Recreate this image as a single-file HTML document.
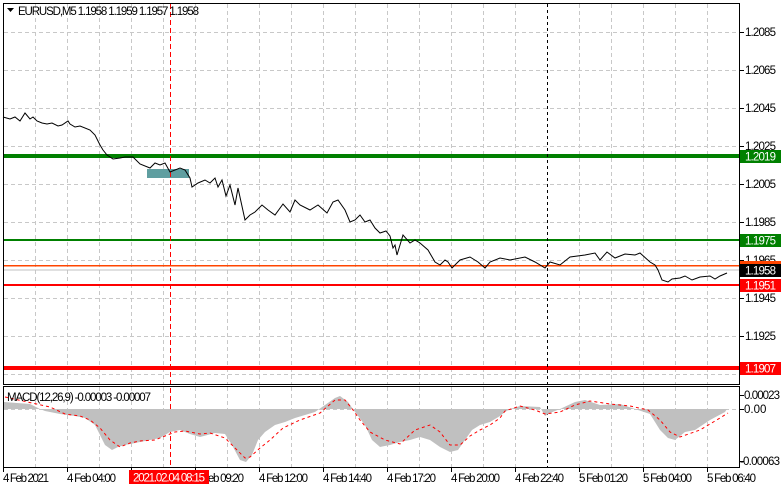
<!DOCTYPE html>
<html><head><meta charset="utf-8">
<style>
html,body{margin:0;padding:0;background:#fff;width:781px;height:489px;overflow:hidden}
svg{display:block}
text{font-family:"Liberation Sans",sans-serif;font-size:11.5px;fill:#000}
</style></head><body>
<svg width="781" height="489" viewBox="0 0 781 489" xmlns="http://www.w3.org/2000/svg">
<rect width="781" height="489" fill="#fff"/>
<g stroke="#c8c8c8" stroke-width="1" stroke-dasharray="4,3">
<path d="M35.5 4V384M67.5 4V384M99.5 4V384M131.5 4V384M163.5 4V384M195.5 4V384M227.5 4V384M259.5 4V384M291.5 4V384M323.5 4V384M355.5 4V384M387.5 4V384M419.5 4V384M451.5 4V384M483.5 4V384M515.5 4V384M579.5 4V384M611.5 4V384M643.5 4V384M675.5 4V384M707.5 4V384"/>
<path d="M4 32.5H740M4 70.5H740M4 108.5H740M4 146.5H740M4 184.5H740M4 222.5H740M4 260.5H740M4 298.5H740M4 336.5H740M4 374.5H740"/>
<path d="M35.5 387V467M67.5 387V467M99.5 387V467M131.5 387V467M163.5 387V467M195.5 387V467M227.5 387V467M259.5 387V467M291.5 387V467M323.5 387V467M355.5 387V467M387.5 387V467M419.5 387V467M451.5 387V467M483.5 387V467M515.5 387V467M579.5 387V467M611.5 387V467M643.5 387V467M675.5 387V467M707.5 387V467"/>
<path d="M4 409.5H740"/>
</g>
<rect x="4" y="154" width="736" height="4" fill="#008000"/>
<rect x="4" y="239" width="736" height="2" fill="#008000"/>
<rect x="4" y="265" width="736" height="1.5" fill="#ff4500"/>
<rect x="4" y="269.5" width="736" height="1" fill="#c0c0c0"/>
<rect x="4" y="284" width="736" height="2" fill="#ff0000"/>
<rect x="4" y="366" width="736" height="4" fill="#ff0000"/>
<rect x="147" y="169" width="42" height="9" fill="#5f9ea0"/>
<path d="M170.5 4V467" stroke="#ff0000" stroke-dasharray="5,3"/>
<path d="M547.5 4V467" stroke="#000" stroke-dasharray="3,3"/>
<polyline fill="none" stroke="#000" stroke-width="1" points="3,117 10,119 15,117 20,121 25,113 30,119 33,117 37,121 42,123 47,124 52,123 58,126 62,125 68,121 70,124 75,127 80,126 90,130 95,135 100,145 103,150 107,155 110,157 113,159 120,158 125,157 133,157 140,164 150,168 155,163 160,165 165,163 170,172 180,168 185,170 190,178 192,187 198,183 205,180 210,183 215,178 218,187 222,180 226,196 230,185 235,205 238,188 245,220 250,215 255,212 262,205 268,210 275,215 283,204 290,212 295,200 300,205 310,210 318,205 327,213 333,202 338,200 345,210 350,222 355,220 360,215 365,222 370,220 375,228 380,233 386,231 390,236 393,248 395,245 397,255 400,245 403,235 410,243 415,240 420,243 428,250 435,262 440,265 445,260 448,262 452,268 460,260 470,257 478,262 485,268 490,262 500,258 510,260 525,257 535,262 545,268 550,262 560,265 570,257 585,255 595,253 600,260 607,252 615,258 625,254 635,255 640,253 650,262 655,265 658,270 662,280 668,282 672,279 680,278 685,276 692,280 700,277 710,276 715,279 720,276 727,273"/>
<polygon fill="#c0c0c0" points="4,409 4,402 30,404 40,409 45,411 60,414 75,416 85,418 95,425 100,435 105,445 112,450 118,447 125,445 140,442 150,440 160,438 170,432 180,430 190,434 200,437 215,433 225,434 232,445 240,460 246,462 252,455 258,440 265,432 275,425 285,422 295,418 305,415 315,412 325,405 335,398 340,396 348,402 355,412 365,425 372,440 380,447 390,445 400,442 410,440 420,437 430,440 440,447 450,452 458,450 465,440 472,430 480,425 490,422 500,416 505,412 510,409 520,406 540,407 545,416 550,413 560,409 575,402 585,400 600,405 620,404 635,409 650,414 660,430 668,438 675,440 685,432 695,430 710,420 725,412 727,409"/>
<polyline fill="none" stroke="#ff0000" stroke-width="1" stroke-dasharray="3,3" points="5,397 50,407 65,414 80,416 90,420 100,428 110,440 120,447 130,443 140,441 155,440 165,436 175,432 185,431 195,433 200,434 210,433 225,438 235,448 245,458 250,457 260,448 270,440 283,428 300,420 320,413 335,400 345,400 353,410 360,420 370,432 385,440 400,444 415,430 430,425 440,432 450,445 460,445 470,436 480,430 490,425 500,418 505,411 520,406 535,410 545,414 560,412 575,405 590,401 610,404 630,406 648,410 660,420 670,432 680,437 700,430 720,418 728,413"/>
<g fill="none" stroke="#000" stroke-width="1">
<rect x="3.5" y="3.5" width="736" height="381"/>
<rect x="3.5" y="386.5" width="736" height="81"/>
</g>
<g stroke="#000"><path d="M740 32.5h4M740 70.5h4M740 108.5h4M740 146.5h4M740 184.5h4M740 222.5h4M740 260.5h4M740 298.5h4M740 336.5h4M740 395.5h4M740 409.5h4M740 461.5h4"/>
<path d="M3.5 468v4M67.5 468v4M131.5 468v4M195.5 468v4M259.5 468v4M323.5 468v4M387.5 468v4M451.5 468v4M515.5 468v4M579.5 468v4M643.5 468v4M707.5 468v4"/></g>
<g>
<text x="745" y="36" textLength="31">1.2085</text>
<text x="745" y="74" textLength="31">1.2065</text>
<text x="745" y="112" textLength="31">1.2045</text>
<text x="745" y="150" textLength="31">1.2025</text>
<text x="745" y="188" textLength="31">1.2005</text>
<text x="745" y="226" textLength="31">1.1985</text>
<text x="745" y="264" textLength="31">1.1965</text>
<text x="745" y="302" textLength="31">1.1945</text>
<text x="745" y="340" textLength="31">1.1925</text>
<text x="744" y="399" textLength="36">0.00023</text>
<text x="744" y="413">0.00</text>
<text x="740" y="465" textLength="40">-0.00063</text>
</g>
<rect x="740" y="150" width="41" height="13" fill="#008000"/><text x="745" y="160.5" textLength="31" style="fill:#fff">1.2019</text>
<rect x="740" y="234" width="41" height="13" fill="#008000"/><text x="745" y="244.5" textLength="31" style="fill:#fff">1.1975</text>
<rect x="740" y="261" width="41" height="8" fill="#ff4500"/>
<rect x="740" y="264" width="41" height="13" fill="#000"/><text x="745" y="274.5" textLength="31" style="fill:#fff">1.1958</text>
<rect x="740" y="279" width="41" height="13" fill="#ff0000"/><text x="745" y="289.5" textLength="31" style="fill:#fff">1.1951</text>
<rect x="740" y="362" width="41" height="13" fill="#ff0000"/><text x="745" y="372.5" textLength="31" style="fill:#fff">1.1907</text>
<path d="M7 8h7l-3.5 4z" fill="#000"/>
<text x="18" y="15" textLength="181">EURUSD,M5  1.1958 1.1959 1.1957 1.1958</text>
<text x="7" y="401" textLength="144">MACD(12,26,9) -0.00003 -0.00007</text>
<g>
<text x="3" y="482" textLength="46">4 Feb 2021</text>
<text x="67" y="482" textLength="49">4 Feb 04:00</text>
<text x="195" y="482" textLength="49">4 Feb 09:20</text>
<text x="259" y="482" textLength="49">4 Feb 12:00</text>
<text x="323" y="482" textLength="49">4 Feb 14:40</text>
<text x="387" y="482" textLength="49">4 Feb 17:20</text>
<text x="451" y="482" textLength="49">4 Feb 20:00</text>
<text x="515" y="482" textLength="49">4 Feb 22:40</text>
<text x="579" y="482" textLength="49">5 Feb 01:20</text>
<text x="643" y="482" textLength="49">5 Feb 04:00</text>
<text x="707" y="482" textLength="49">5 Feb 06:40</text>
</g>
<rect x="129" y="470" width="80" height="14" fill="#ff0000"/>
<text x="133" y="481.5" textLength="72" style="fill:#fff">2021.02.04 08:15</text>
</svg>
</body></html>
